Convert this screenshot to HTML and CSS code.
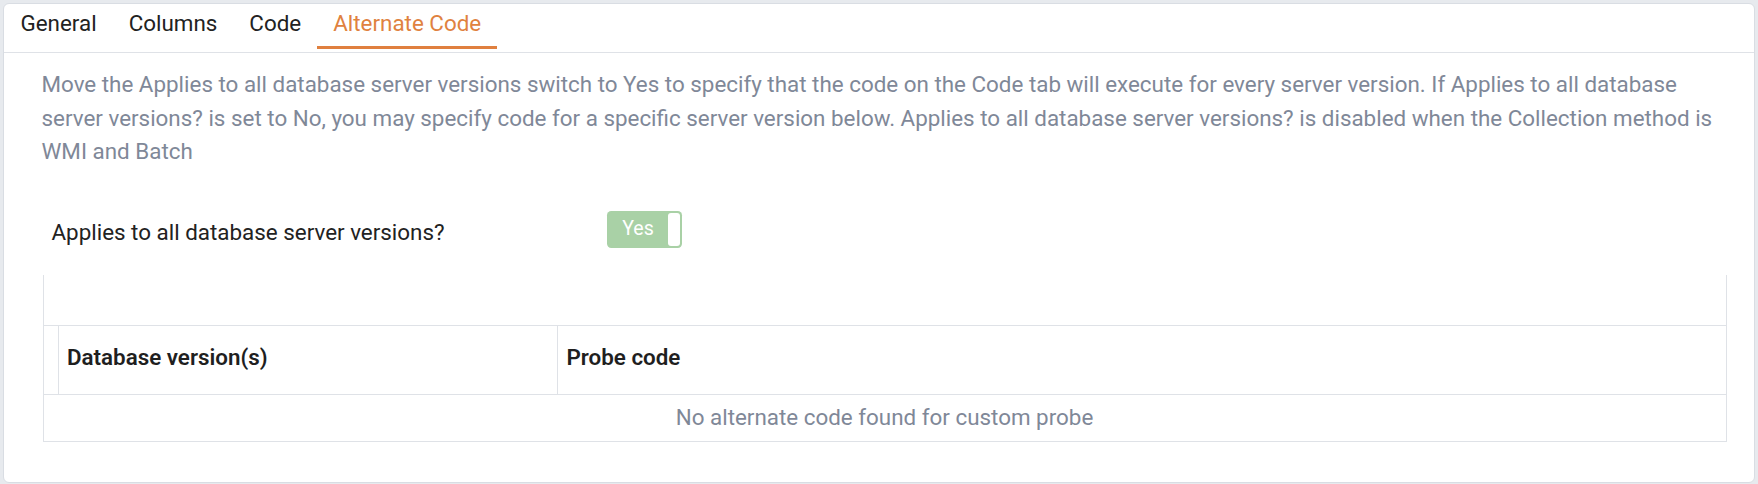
FILE: index.html
```html
<!DOCTYPE html>
<html lang="en">
<head>
<meta charset="utf-8">
<title>Alternate Code</title>
<link rel="stylesheet" href="styles.css">
</head>
<body>
<div class="panel">
  <div class="tabs">
    <div class="tab">General</div>
    <div class="tab">Columns</div>
    <div class="tab">Code</div>
    <div class="tab active">Alternate Code</div>
  </div>
  <div class="content">
    <p class="desc">Move the Applies to all database server versions switch to Yes to specify that the code on the Code tab will execute for every server version. If Applies to all database server versions? is set to No, you may specify code for a specific server version below. Applies to all database server versions? is disabled when the Collection method is WMI and Batch</p>
    <div class="field-row">
      <label class="field-label">Applies to all database server versions?</label>
      <div class="switch">
        <span class="switch-text">Yes</span>
        <span class="switch-knob"></span>
      </div>
    </div>
    <div class="grid">
      <div class="grid-toolbar"></div>
      <div class="grid-head">
        <div class="cell handle"></div>
        <div class="cell head">Database version(s)</div>
        <div class="cell head last">Probe code</div>
      </div>
      <div class="grid-empty">No alternate code found for custom probe</div>
    </div>
  </div>
</div>
</body>
</html>
```

FILE: styles.css
```css
html, body {
  margin: 0;
  padding: 0;
  height: 484px;
  background: #e7eaee;
  overflow: hidden;
}

body {
  padding: 3px 3px 1px 3px;
  box-sizing: border-box;
  font-family: Roboto, "Liberation Sans", Arial, sans-serif;
  font-size: 22.4px;
  line-height: 33.6px;
  color: #222222;
}

.panel {
  height: 480px;
  box-sizing: border-box;
  background: #ffffff;
  border: 1px solid #d9dde3;
  border-radius: 6px;
}

.tabs {
  display: flex;
  padding-left: 0.5px;
  border-bottom: 1.4px solid #dfe2e7;
}

.tab {
  padding: 3px 16px 5.1px;
  margin-bottom: 3px;
  border-bottom: 3.6px solid transparent;
  color: #222222;
  white-space: nowrap;
}

.tab.active {
  color: #e0823f;
  border-bottom-color: #e0803f;
}

.content {
  padding: 0 27.5px 0 37.5px;
}

.desc {
  margin: 15.3px 0 0;
  color: #7f8898;
}

.field-row {
  display: flex;
  align-items: flex-start;
  margin-top: 42.5px;
  padding-left: 10px;
}

.field-label {
  width: 555px;
  margin-top: 5.2px;
  color: #222222;
}

.switch {
  width: 75px;
  height: 37px;
  box-sizing: border-box;
  display: flex;
  align-items: center;
  justify-content: space-between;
  padding: 2px 1.7px 2px 15.7px;
  background: #a9d1a6;
  border-radius: 4.2px;
}

.switch-text {
  font-size: 19.6px;
  line-height: 31px;
  padding-bottom: 2px;
  color: #ffffff;
}

.switch-knob {
  width: 12.3px;
  height: 33.4px;
  background: #ffffff;
  border-radius: 3px;
}

.grid {
  margin-top: 24.7px;
  margin-left: 1px;
  border-left: 1.4px solid #dfe2e7;
  border-right: 1.4px solid #dfe2e7;
  border-bottom: 1.4px solid #dfe2e7;
}

.grid-toolbar {
  height: 50px;
}

.grid-head {
  display: grid;
  grid-template-columns: 15px 499.5px 1fr;
  border-top: 1.4px solid #dfe2e7;
  border-bottom: 1.4px solid #dfe2e7;
}

.cell {
  border-right: 1.4px solid #dfe2e7;
}

.cell.last {
  border-right: none;
}

.cell.head {
  padding: 15.1px 8.4px 19.9px;
  font-weight: 600;
  color: #1f1f1f;
  white-space: nowrap;
}

.grid-empty {
  padding: 6px 0;
  text-align: center;
  color: #7f8898;
}
```
